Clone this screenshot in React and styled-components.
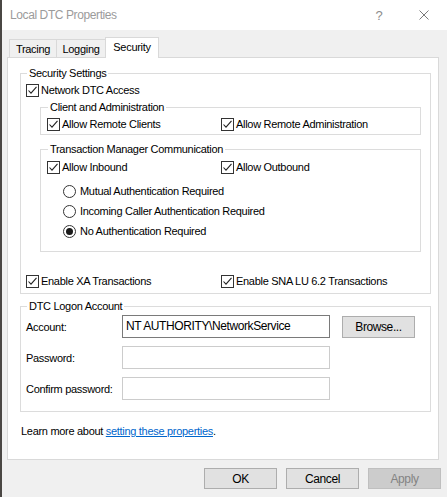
import React from 'react'
import styled, { createGlobalStyle } from 'styled-components'

const Global = createGlobalStyle`
  html, body {
    margin: 0;
    padding: 0;
    background: #f0f0f0;
  }
  body {
    font-family: "Liberation Sans", Arial, sans-serif;
    font-size: 11px;
    letter-spacing: -0.3px;
    color: #000;
  }
`

const tabs = [
  { label: 'Tracing', width: 48 },
  { label: 'Logging', width: 50 },
  { label: 'Security', width: 54, active: true }
]

const radios = [
  { label: 'Mutual Authentication Required' },
  { label: 'Incoming Caller Authentication Required' },
  { label: 'No Authentication Required', checked: true }
]

const CheckBox = ({ label }) => (
  <Option>
    <Box>
      <svg width="11" height="11" viewBox="0 0 11 11">
        <path d="M1.5 5.5 L4 8.2 L9.5 1.8" fill="none" stroke="#222" strokeWidth="1.1" />
      </svg>
    </Box>
    <span>{label}</span>
  </Option>
)

const Radio = ({ label, checked }) => (
  <Option>
    <Circle>{checked && <Dot />}</Circle>
    <span>{label}</span>
  </Option>
)

const App = () => (
  <Window>
    <Global />
    <TitleBar>
      <Title>Local DTC Properties</Title>
      <HelpButton>?</HelpButton>
      <CloseButton>
        <svg width="10" height="10" viewBox="0 0 10 10">
          <path d="M0.5 0.5 L9.5 9.5 M9.5 0.5 L0.5 9.5" stroke="#7a7a7a" strokeWidth="1" />
        </svg>
      </CloseButton>
    </TitleBar>

    <Body>
      <TabRow>
        {tabs.map(t => (
          <Tab key={t.label} $w={t.width} $active={t.active}>{t.label}</Tab>
        ))}
      </TabRow>

      <Panel>
        <Group $m="0" $pad="3px 0 5px 5px">
          <Legend>Security Settings</Legend>
          <CheckBox label="Network DTC Access" />

          <Group $m="3px 9px 0 14px" $pad="3px 0 3px 6px">
            <Legend>Client and Administration</Legend>
            <Columns $col={174}>
              <CheckBox label="Allow Remote Clients" />
              <CheckBox label="Allow Remote Administration" />
            </Columns>
          </Group>

          <Group $m="7px 9px 0 14px" $pad="4px 0 13px 6px">
            <Legend>Transaction Manager Communication</Legend>
            <Columns $col={174}>
              <CheckBox label="Allow Inbound" />
              <CheckBox label="Allow Outbound" />
            </Columns>
            <RadioList>
              {radios.map(r => (
                <Radio key={r.label} label={r.label} checked={r.checked} />
              ))}
            </RadioList>
          </Group>

          <Columns $col={195} $mt={22}>
            <CheckBox label="Enable XA Transactions" />
            <CheckBox label="Enable SNA LU 6.2 Transactions" />
          </Columns>
        </Group>

        <Group $m="5px 0 0 0" $pad="2px 0 11px 5px">
          <Legend>DTC Logon Account</Legend>
          <FormGrid>
            <FieldLabel>Account:</FieldLabel>
            <Input $enabled>NT AUTHORITY\NetworkService</Input>
            <Button $w={73} $h={22}>Browse...</Button>

            <FieldLabel>Password:</FieldLabel>
            <Input />
            <span />

            <FieldLabel>Confirm password:</FieldLabel>
            <Input />
            <span />
          </FormGrid>
        </Group>

        <LearnMore>
          Learn more about <Link href="#">setting these properties</Link>.
        </LearnMore>
      </Panel>

      <Footer>
        <Button $w={73} $h={21}>OK</Button>
        <Button $w={73} $h={21}>Cancel</Button>
        <Button $w={73} $h={21} $disabled>Apply</Button>
      </Footer>
    </Body>
  </Window>
)

/* STYLE */
const Window = styled.div`
  width: 447px;
  height: 497px;
  box-sizing: border-box;
  border-left: 2px solid #4a4744;
  display: flex;
  flex-direction: column;
  overflow: hidden;
`

const TitleBar = styled.div`
  height: 30px;
  flex: none;
  background: #fff;
  display: flex;
  align-items: center;
  padding-left: 8px;
`

const Title = styled.div`
  flex: 1;
  font-size: 12px;
  letter-spacing: -0.4px;
  color: #9b9b9b;
`

const HelpButton = styled.div`
  width: 30px;
  margin-right: 15px;
  text-align: center;
  font-size: 13px;
  color: #8c8c8c;
`

const CloseButton = styled.div`
  width: 30px;
  margin-right: 8px;
  display: flex;
  justify-content: center;
`

const Body = styled.div`
  flex: 1;
  background: #f0f0f0;
  padding: 7px 7px 0 5px;
  display: flex;
  flex-direction: column;
`

const TabRow = styled.div`
  height: 20px;
  display: flex;
  align-items: flex-end;
  padding-left: 2px;
  position: relative;
  z-index: 1;
`

const Tab = styled.div`
  width: ${p => p.$w}px;
  height: ${p => (p.$active ? 21 : 18)}px;
  margin-bottom: ${p => (p.$active ? -1 : 0)}px;
  margin-left: -1px;
  &:first-child { margin-left: 0; }
  box-sizing: border-box;
  border: 1px solid #d9d9d9;
  border-bottom: none;
  background: ${p => (p.$active ? '#fff' : '#f0f0f0')};
  display: flex;
  align-items: center;
  justify-content: center;
  padding-bottom: ${p => (p.$active ? 3 : 0)}px;
`

const Panel = styled.div`
  width: 432px;
  height: 403px;
  box-sizing: border-box;
  background: #fff;
  border: 1px solid #d9d9d9;
  padding: 8px 7px 0 12px;
`

const Group = styled.fieldset`
  margin: ${p => p.$m};
  padding: ${p => p.$pad};
  border: 1px solid #dcdcdc;
  min-width: 0;
`

const Legend = styled.legend`
  padding: 0 2px;
  margin-left: 1px;
  line-height: 14px;
`

const Option = styled.label`
  display: flex;
  align-items: center;
  height: 14px;
  line-height: 14px;
  gap: 2px;
  white-space: nowrap;
`

const Box = styled.span`
  width: 13px;
  height: 13px;
  box-sizing: border-box;
  border: 1px solid #333;
  background: #fff;
  display: flex;
  align-items: center;
  justify-content: center;
  flex: none;
`

const Circle = styled.span`
  width: 13px;
  height: 13px;
  box-sizing: border-box;
  border: 1px solid #333;
  border-radius: 50%;
  background: #fff;
  display: flex;
  align-items: center;
  justify-content: center;
  flex: none;
  margin-right: 2px;
`

const Dot = styled.span`
  width: 7px;
  height: 7px;
  border-radius: 50%;
  background: #1a1a1a;
`

const Columns = styled.div`
  display: grid;
  grid-template-columns: ${p => p.$col}px 1fr;
  margin-top: ${p => p.$mt || 0}px;
`

const RadioList = styled.div`
  display: flex;
  flex-direction: column;
  gap: 6px;
  margin: 10px 0 0 16px;
`

const FormGrid = styled.div`
  display: grid;
  grid-template-columns: 84px 208px 73px;
  column-gap: 12px;
  row-gap: 8px;
  align-items: center;
`

const FieldLabel = styled.div`
  line-height: 14px;
  padding-top: 1px;
  white-space: nowrap;
`

const Input = styled.div`
  height: 23px;
  box-sizing: border-box;
  border: 1px solid ${p => (p.$enabled ? '#7a7a7a' : '#cccccc')};
  background: #fff;
  display: flex;
  align-items: center;
  padding: 0 0 2px 3px;
  font-size: 12px;
  letter-spacing: -0.4px;
  white-space: nowrap;
`

const Button = styled.div`
  width: ${p => p.$w}px;
  height: ${p => p.$h}px;
  box-sizing: border-box;
  background: ${p => (p.$disabled ? '#cccccc' : '#e1e1e1')};
  border: 1px solid ${p => (p.$disabled ? '#bfbfbf' : '#adadad')};
  color: ${p => (p.$disabled ? '#838383' : '#000')};
  display: flex;
  align-items: center;
  justify-content: center;
  font-size: 12px;
  letter-spacing: -0.4px;
`

const LearnMore = styled.div`
  margin: 12px 0 0 1px;
  line-height: 14px;
`

const Link = styled.a`
  color: #0066cc;
  text-decoration: underline;
  text-underline-offset: 1px;
`

const Footer = styled.div`
  display: flex;
  justify-content: flex-end;
  gap: 9px;
  margin-top: 8px;
  margin-right: -1px;
`

export default App
